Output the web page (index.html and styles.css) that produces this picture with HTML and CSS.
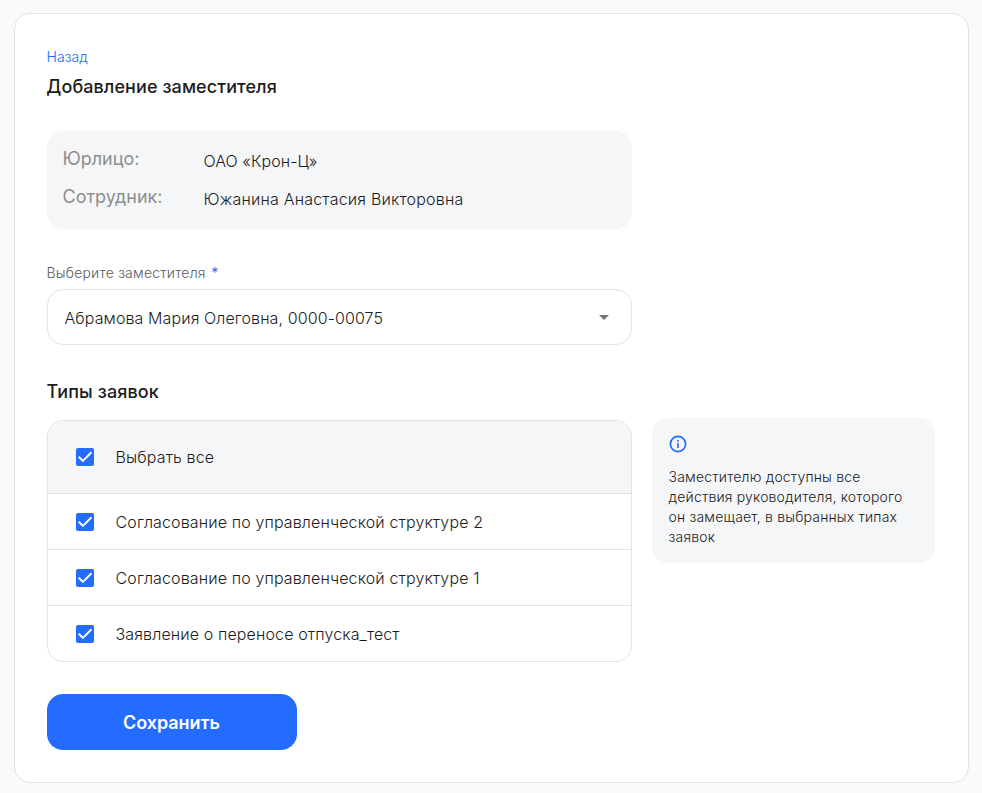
FILE: index.html
```html
<!DOCTYPE html>
<html lang="ru">
<head>
<meta charset="utf-8">
<title>Добавление заместителя</title>
<link rel="stylesheet" href="styles.css">
</head>
<body>
<main class="page">
  <a class="back">Назад</a>
  <h1 class="title">Добавление заместителя</h1>
  <dl class="summary">
    <dt>Юрлицо:</dt><dd>ОАО «Крон-Ц»</dd>
    <dt>Сотрудник:</dt><dd class="person">Южанина Анастасия Викторовна</dd>
  </dl>
  <div class="label">Выберите заместителя <span class="required">*</span></div>
  <div class="select"><span class="value">Абрамова Мария Олеговна, 0000-00075</span><svg width="10" height="5" viewBox="0 0 10 5"><path d="M0 0h10L5 5z" fill="#757575"/></svg></div>
  <h2 class="subtitle">Типы заявок</h2>
  <div class="row">
    <div class="list">
      <label class="item all"><svg class="check" viewBox="0 0 18 18"><rect width="18" height="18" rx="2"/><path d="M2.7 8.7l4.2 4.2 8.6-8.6"/></svg><span>Выбрать все</span></label>
      <label class="item"><svg class="check" viewBox="0 0 18 18"><rect width="18" height="18" rx="2"/><path d="M2.7 8.7l4.2 4.2 8.6-8.6"/></svg><span>Согласование по управленческой структуре 2</span></label>
      <label class="item"><svg class="check" viewBox="0 0 18 18"><rect width="18" height="18" rx="2"/><path d="M2.7 8.7l4.2 4.2 8.6-8.6"/></svg><span>Согласование по управленческой структуре 1</span></label>
      <label class="item"><svg class="check" viewBox="0 0 18 18"><rect width="18" height="18" rx="2"/><path d="M2.7 8.7l4.2 4.2 8.6-8.6"/></svg><span>Заявление о переносе отпуска_тест</span></label>
    </div>
    <aside class="hint">
      <svg class="info" viewBox="0 0 18 18"><circle cx="9" cy="9" r="7.6"/><path d="M9 8.2v4.8M9 5v1.8"/></svg>
      <p>Заместителю доступны все действия руководителя, которого он замещает, в выбранных типах заявок</p>
    </aside>
  </div>
  <button class="save">Сохранить</button>
</main>
</body>
</html>
```
FILE: styles.css
```css
* { box-sizing: border-box; }
body { margin: 0; background: #fafafa; font-family: Inter, "Liberation Sans", sans-serif; color: #1c1c1c; }
.page { margin: 13px 13px 0 14px; height: 770px; padding: 33px 32px 0; background: #fff; border: 1px solid #e1e3e8; border-radius: 16px; }
.back { display: block; font-size: 14px; line-height: 20px; color: #246cff; font-weight: 350; text-indent: -0.5px; letter-spacing: 0.07px; }
.title, .subtitle { margin: 0; font-size: 18px; line-height: 24px; font-weight: 550; }
.title { margin-top: 8px; text-indent: -0.7px; letter-spacing: 0.08px; }
.summary { width: 585px; height: 98px; margin: 32px 0 0; padding: 8px 16px; background: #f4f6f8; border-radius: 16px; display: grid; grid-template-columns: 141px 1fr; grid-auto-rows: 38px; font-weight: 300; }
.summary dt { font-size: 18px; line-height: 40px; color: #8e8e8e; font-weight: 400; text-indent: -0.5px; letter-spacing: -0.02px; }
.summary dd { margin: 0; font-size: 16px; line-height: 44px; text-indent: -0.5px; letter-spacing: 0.06px; }
.summary .person { letter-spacing: 0.2px; }
.label { margin-top: 34px; font-size: 14px; line-height: 20px; color: #5a5d61; font-weight: 300; text-indent: -0.5px; letter-spacing: 0.2px; }
.required { margin-left: 1.5px; color: #246cff; font-weight: 400; }
.select { margin-top: 6px; width: 585px; height: 56px; padding: 0 22px 0 16.5px; border: 1px solid #e1e3e8; border-radius: 16px; display: flex; align-items: center; justify-content: space-between; font-size: 16px; font-weight: 300; letter-spacing: 0.1px; }
.value { padding-top: 2px; }
.subtitle { margin-top: 35px; text-indent: -0.5px; letter-spacing: 0.1px; }
.row { display: flex; gap: 20px; align-items: flex-start; margin-top: 14px; }
.list { width: 585px; margin-top: 2px; border: 1px solid #e1e3e8; border-radius: 16px; overflow: hidden; }
.item { display: flex; align-items: center; gap: 21.5px; height: 56px; padding-left: 28px; border-top: 1px solid #e0e2e4; font-size: 16px; font-weight: 300; letter-spacing: 0.13px; }
.all { height: 72px; border-top: 0; background: #f4f6f8; }
.check { width: 18px; height: 18px; }
.check rect { fill: #246cff; }
.check path { fill: none; stroke: #fff; stroke-width: 2; }
.hint { width: 283px; height: 145px; padding: 17px 16px 16px 17px; background: #f4f6f8; border-radius: 16px; }
.info { display: block; width: 18px; height: 18px; fill: none; stroke: #246cff; stroke-width: 1.7; }
.hint p { margin: 14px 0 0 -0.4px; font-size: 14px; line-height: 20px; font-weight: 300; letter-spacing: 0.17px; }
.save { display: block; margin-top: 32px; width: 250px; height: 56px; padding: 2px 1px 0 0; border: 0; border-radius: 16px; background: #246cff; color: #fff; font: 600 18px/24px Inter, "Liberation Sans", sans-serif; letter-spacing: -0.05px; }
```
